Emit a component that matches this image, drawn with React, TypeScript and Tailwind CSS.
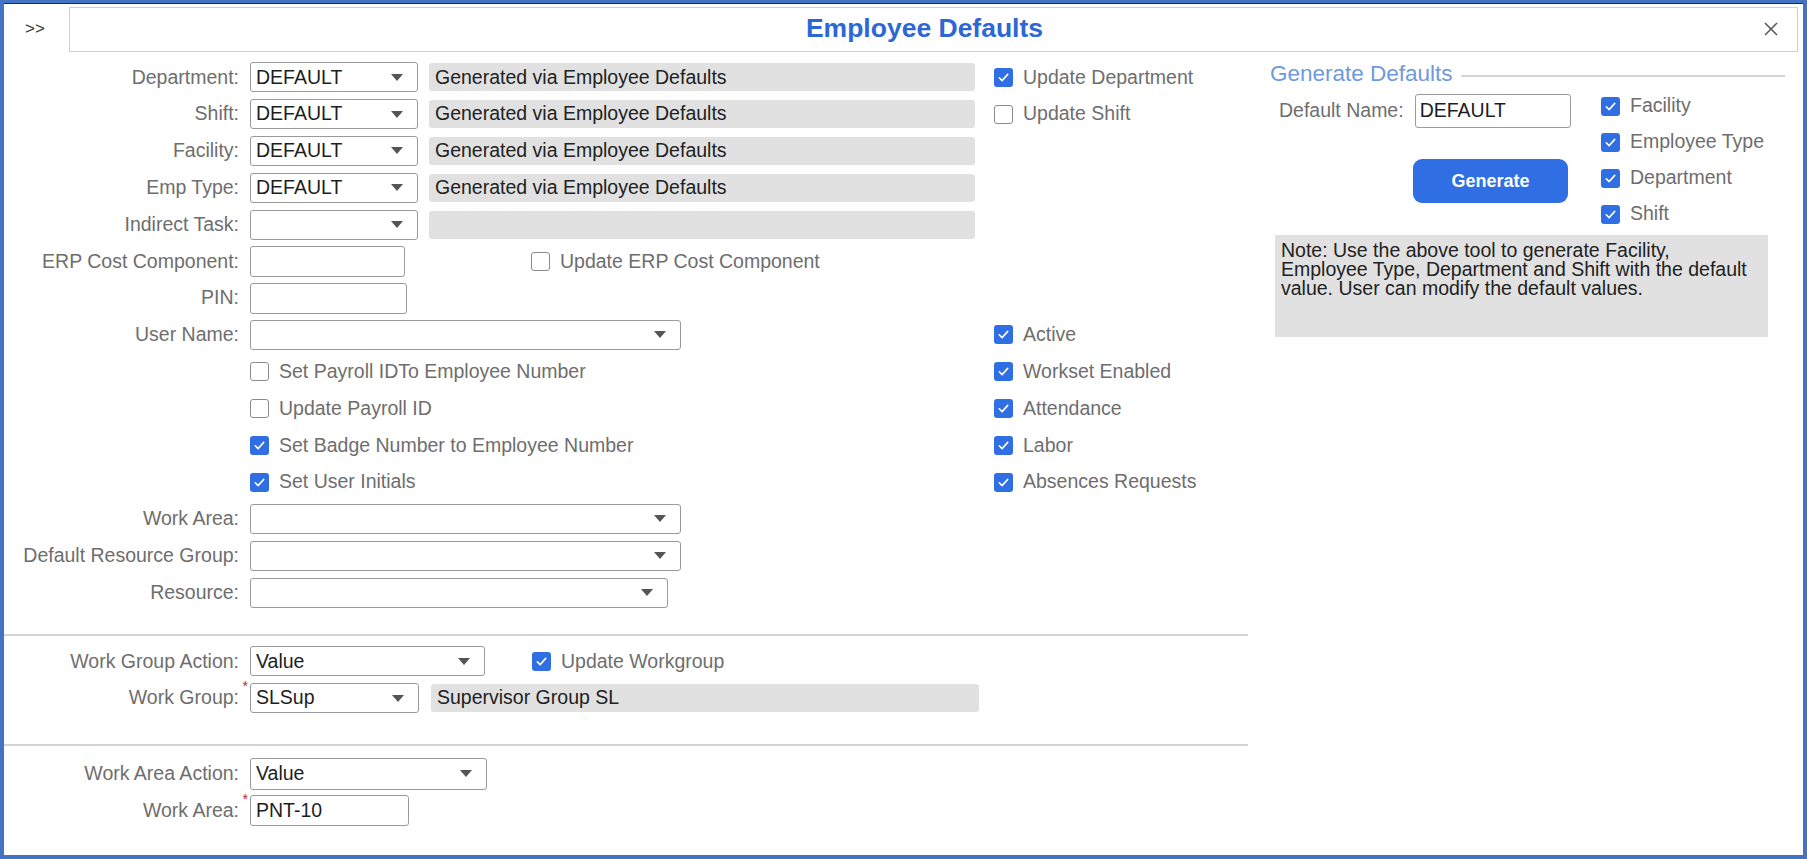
import React from 'react';

// --- Small building blocks ---
const Check = ({ on }: { on?: boolean }) =>
  on ? (
    <span className="w-[19px] h-[19px] rounded-[3px] bg-[#2f6fe3] flex items-center justify-center shrink-0">
      <svg viewBox="0 0 16 16" className="w-[15px] h-[15px]">
        <path d="M3.5 8.3l3 3 6-6.6" fill="none" stroke="white" strokeWidth="1.7" strokeLinecap="round" strokeLinejoin="round" />
      </svg>
    </span>
  ) : (
    <span className="w-[19px] h-[19px] rounded-[3px] border border-[#8c8c8c] bg-white shrink-0" />
  );

const CheckItem = ({ on, label }: { on?: boolean; label: string }) => (
  <div className="flex items-center gap-[10px]">
    <Check on={on} />
    <span className="text-[#6e6e6e] leading-none">{label}</span>
  </div>
);

const Select = ({ value, w, h = 'h-[30px]' }: { value?: string; w: string; h?: string }) => (
  <div className={`${w} ${h} border border-[#9a9a9a] rounded-[3px] bg-white flex items-center justify-between pl-[5px] pr-[14px] shrink-0`}>
    <span className="text-[#1e1e1e] leading-none">{value}</span>
    <svg viewBox="0 0 12 7" className="w-[12px] h-[7px]">
      <path d="M0 0h12L6 7z" fill="#555" />
    </svg>
  </div>
);

const Input = ({ value, w }: { value?: string; w: string }) => (
  <div className={`${w} h-[31px] border border-[#9a9a9a] rounded-[3px] bg-white flex items-center pl-[5px] shrink-0`}>
    <span className="text-[#1e1e1e] leading-none">{value}</span>
  </div>
);

const ReadOnly = ({ value, w = 'w-[546px]' }: { value?: string; w?: string }) => (
  <div className={`${w} h-[28px] rounded-[3px] bg-[#e1e1e1] flex items-center pl-[6px] shrink-0`}>
    <span className="text-[#222] leading-none">{value}</span>
  </div>
);

const Label = ({ text, req }: { text: string; req?: boolean }) => (
  <div className="w-[235px] shrink-0 text-right text-[#6e6e6e] leading-none">
    <span className="relative">
      {text}
      {req && <span className="absolute -right-[9px] -top-[7px] text-[#d62020] text-[14px]">*</span>}
    </span>
  </div>
);

// a form row: label | main area (249..1001) | right column
const Row = ({ label, req, children, right }: { label?: string; req?: boolean; children?: React.ReactNode; right?: React.ReactNode }) => (
  <div className="h-[36.8px] flex items-center">
    {label ? <Label text={label} req={req} /> : <div className="w-[235px] shrink-0" />}
    <div className="w-[755px] pl-[11px] flex items-center shrink-0">{children}</div>
    <div className="flex items-center">{right}</div>
  </div>
);

export default function App() {
  return (
    <div
      className="w-[1807px] h-[859px] bg-white border-[4px] border-[#4472c4] border-t-[3px] flex flex-col overflow-hidden text-[19.5px]"
      style={{ fontFamily: '"Liberation Sans", Arial, sans-serif' }}
    >
      <div className="h-px bg-[#2b2b2b]" />
      {/* Header */}
      <div className="h-[48px] flex items-center shrink-0 pt-[2px]">
        <div className="w-[65px] pl-[21px] text-[17px] text-[#333]">&gt;&gt;</div>
        <div className="w-[1729px] h-[45px] border border-[#cfcfcf] relative flex items-center justify-center pr-[18px]">
          <span className="text-[26.5px] font-bold text-[#2c68d4]">Employee Defaults</span>
          <svg viewBox="0 0 16 16" className="absolute right-[18px] w-[16px] h-[16px]">
            <path d="M2 2l12 12M14 2L2 14" stroke="#555" strokeWidth="1.5" />
          </svg>
        </div>
      </div>

      {/* Body */}
      <div className="flex flex-1">
        {/* Left form */}
        <div className="w-[1244px] shrink-0 flex flex-col pt-[7px]">
          <Row label="Department:" right={<CheckItem on label="Update Department" />}>
            <Select value="DEFAULT" w="w-[168px]" />
            <div className="ml-[11px]"><ReadOnly value="Generated via Employee Defaults" /></div>
          </Row>
          <Row label="Shift:" right={<CheckItem label="Update Shift" />}>
            <Select value="DEFAULT" w="w-[168px]" />
            <div className="ml-[11px]"><ReadOnly value="Generated via Employee Defaults" /></div>
          </Row>
          <Row label="Facility:">
            <Select value="DEFAULT" w="w-[168px]" />
            <div className="ml-[11px]"><ReadOnly value="Generated via Employee Defaults" /></div>
          </Row>
          <Row label="Emp Type:">
            <Select value="DEFAULT" w="w-[168px]" />
            <div className="ml-[11px]"><ReadOnly value="Generated via Employee Defaults" /></div>
          </Row>
          <Row label="Indirect Task:">
            <Select w="w-[168px]" />
            <div className="ml-[11px]"><ReadOnly /></div>
          </Row>
          <Row label="ERP Cost Component:">
            <Input w="w-[155px]" />
            <div className="ml-[126px]"><CheckItem label="Update ERP Cost Component" /></div>
          </Row>
          <Row label="PIN:">
            <Input w="w-[157px]" />
          </Row>
          <Row label="User Name:" right={<CheckItem on label="Active" />}>
            <Select w="w-[431px]" />
          </Row>
          <Row right={<CheckItem on label="Workset Enabled" />}>
            <CheckItem label="Set Payroll IDTo Employee Number" />
          </Row>
          <Row right={<CheckItem on label="Attendance" />}>
            <CheckItem label="Update Payroll ID" />
          </Row>
          <Row right={<CheckItem on label="Labor" />}>
            <CheckItem on label="Set Badge Number to Employee Number" />
          </Row>
          <Row right={<CheckItem on label="Absences Requests" />}>
            <CheckItem on label="Set User Initials" />
          </Row>
          <Row label="Work Area:">
            <Select w="w-[431px]" />
          </Row>
          <Row label="Default Resource Group:">
            <Select w="w-[431px]" />
          </Row>
          <Row label="Resource:">
            <Select w="w-[418px]" />
          </Row>

          <div className="mt-[23px] h-[2px] bg-[#d4d4d4]" />
          <div className="pt-[7px]">
            <Row label="Work Group Action:">
              <Select value="Value" w="w-[235px]" />
              <div className="ml-[47px]"><CheckItem on label="Update Workgroup" /></div>
            </Row>
            <Row label="Work Group:" req>
              <Select value="SLSup" w="w-[169px]" />
              <div className="ml-[12px]"><ReadOnly value="Supervisor Group SL" w="w-[548px]" /></div>
            </Row>
          </div>

          <div className="mt-[27px] h-[2px] bg-[#d4d4d4]" />
          <div className="pt-[10px]">
            <Row label="Work Area Action:">
              <Select value="Value" w="w-[237px]" h="h-[32px]" />
            </Row>
            <Row label="Work Area:" req>
              <Input value="PNT-10" w="w-[159px]" />
            </Row>
          </div>
        </div>

        {/* Right panel */}
        <div className="flex-1 flex flex-col pl-[22px] pt-[8px] pr-[18px]">
          <div className="h-[28px] flex items-center">
            <span className="text-[22.5px] text-[#6f99de] leading-none">Generate Defaults</span>
            <div className="flex-1 h-[2px] bg-[#d4d4d4] ml-[8px] mt-[4px]" />
          </div>
          <div className="flex">
            <div className="w-[331px] shrink-0 flex flex-col">
              <div className="mt-[6px] flex items-center pl-[9px]">
                <span className="text-[#6e6e6e] leading-none">Default Name:</span>
                <div className="ml-[11px] w-[156px] h-[34px] border border-[#9a9a9a] rounded-[3px] flex items-center pl-[4px]">
                  <span className="text-[#1e1e1e] leading-none">DEFAULT</span>
                </div>
              </div>
              <button className="mt-[31px] ml-[143px] w-[155px] h-[44px] rounded-[9px] bg-[#2f6fe3] text-white font-bold text-[18px]">
                Generate
              </button>
            </div>
            <div className="flex flex-col">
              <div className="h-[36px] flex items-center"><CheckItem on label="Facility" /></div>
              <div className="h-[36px] flex items-center"><CheckItem on label="Employee Type" /></div>
              <div className="h-[36px] flex items-center"><CheckItem on label="Department" /></div>
              <div className="h-[36px] flex items-center"><CheckItem on label="Shift" /></div>
            </div>
          </div>
          <div className="mt-[3px] ml-[5px] w-[493px] h-[102px] bg-[#e1e1e1] pl-[6px] pr-[10px] pt-[6px] text-[#222] text-[19.5px] leading-[19px]">
            Note: Use the above tool to generate Facility, Employee Type, Department and Shift with the default value. User can modify the default values.
          </div>
        </div>
      </div>
    </div>
  );
}
